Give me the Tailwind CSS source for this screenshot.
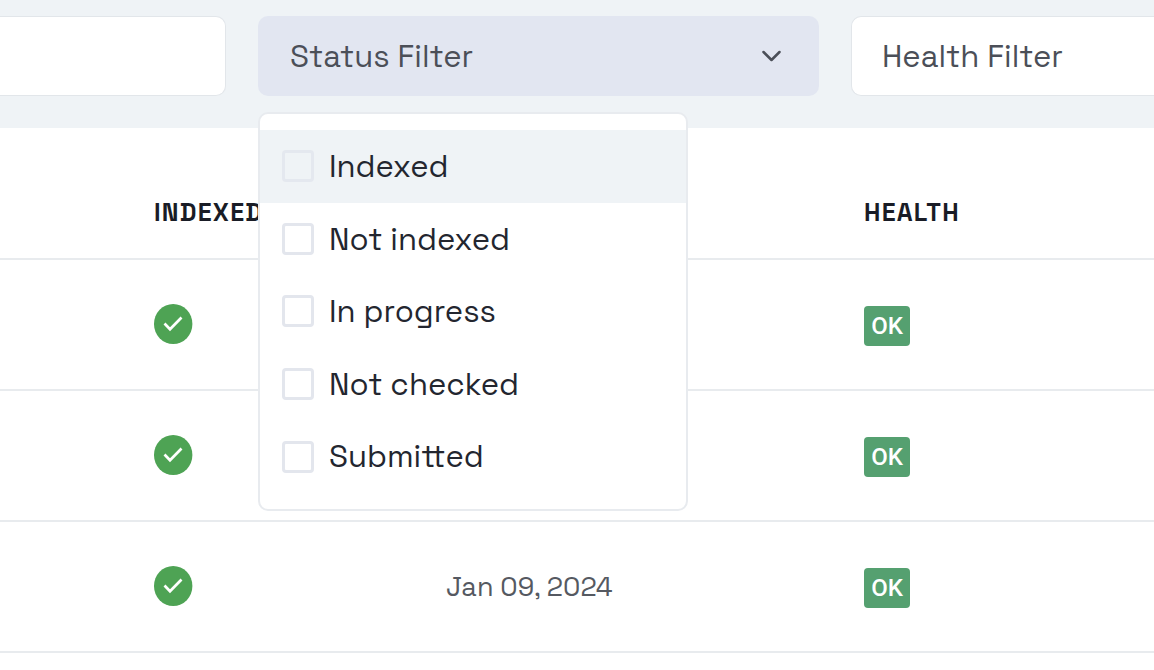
<!DOCTYPE html>
<html lang="en">
<head>
  <meta charset="UTF-8" />
  <meta name="viewport" content="width=device-width, initial-scale=1.0"/>
  <title>Indexing</title>
  <script src="https://cdn.jsdelivr.net/npm/@tailwindcss/browser@4"></script>
</head>
<body class="bg-white min-h-screen overflow-hidden font-['Space_Grotesk','Inter',sans-serif] text-[#23262f]">

  <!-- Filters -->
  <form class="grid grid-cols-[226px_561fr_303fr] gap-8 bg-[#eff3f6] pt-4 pb-8">
    <input type="text" id="search" aria-label="Search"
           class="h-20 min-w-0 px-8 bg-white border border-l-0 border-[#e2e6ea] rounded-r-[10px] text-[31px]" />

    <div class="relative">
      <button type="button" aria-expanded="true" aria-controls="status-menu"
              class="w-full h-20 px-8 flex items-center justify-between bg-[#e2e6f1] rounded-[10px] text-[31px] text-[#4b4f58]">
        Status Filter
        <svg class="w-8 h-8" viewBox="0 0 32 32" fill="none" stroke="#4b4f58" stroke-width="2.500" stroke-linecap="round" stroke-linejoin="round">
          <path d="M8.500 12l8 8 8-8" />
        </svg>
      </button>

      <!-- Status options -->
      <div id="status-menu" class="absolute z-10 left-0 top-24 w-[430px] py-4 bg-white border-2 border-[#e8ebef] rounded-[10px] text-[31px]">
        <div class="h-[363px] grid grid-rows-5">
          <label class="px-[22px] flex items-center gap-[15px] bg-[#eff3f6]">
            <input type="checkbox" class="appearance-none size-8 border-3 border-[#e4e8ef] rounded-sm" />
            Indexed
          </label>
          <label class="px-[22px] flex items-center gap-[15px]">
            <input type="checkbox" class="appearance-none size-8 border-3 border-[#e3e6ed] rounded-sm" />
            Not indexed
          </label>
          <label class="px-[22px] flex items-center gap-[15px]">
            <input type="checkbox" class="appearance-none size-8 border-3 border-[#e3e6ed] rounded-sm" />
            In progress
          </label>
          <label class="px-[22px] flex items-center gap-[15px]">
            <input type="checkbox" class="appearance-none size-8 border-3 border-[#e3e6ed] rounded-sm" />
            Not checked
          </label>
          <label class="px-[22px] flex items-center gap-[15px]">
            <input type="checkbox" class="appearance-none size-8 border-3 border-[#e3e6ed] rounded-sm" />
            Submitted
          </label>
        </div>
      </div>
    </div>

    <select id="health" aria-label="Health Filter"
            class="appearance-none h-20 min-w-0 pl-[30px] bg-white border border-r-0 border-[#e2e6ea] rounded-l-[10px] text-[31px] text-[#4b4f58]">
      <option>Health Filter</option>
    </select>
  </form>

  <!-- Pages table -->
  <table class="w-full table-fixed text-left">
    <colgroup>
      <col class="w-[154px]" />
      <col class="w-[292px]" />
      <col class="w-[418px]" />
      <col />
    </colgroup>
    <thead>
      <tr class="h-[131px] border-b-2 border-[#e8ebee] text-[25px] font-bold tracking-wider text-[#191c26]">
        <th></th>
        <th class="pt-10">INDEXED</th>
        <th></th>
        <th class="pt-10">HEALTH</th>
      </tr>
    </thead>
    <tbody>
      <tr class="h-[131px] border-b-2 border-[#e8ebee]">
        <td></td>
        <td class="pb-0.5">
          <svg class="w-10 h-10" viewBox="0 0 40 40" fill="none" role="img" aria-label="Indexed">
            <ellipse cx="19.200" cy="20" rx="19.200" ry="20" fill="#4ea354" />
            <path d="M10.500 19.500l5.500 5.700 11.500-11.700" stroke="#fff" stroke-width="2.700" />
          </svg>
        </td>
        <td></td>
        <td class="pt-0.5"><span class="inline-flex items-center justify-center align-middle w-[46px] h-10 bg-[#55a070] rounded-sm font-['Roboto',sans-serif] text-2xl font-medium text-white">OK</span></td>
      </tr>
      <tr class="h-[131px] border-b-2 border-[#e8ebee]">
        <td></td>
        <td class="pb-0.5">
          <svg class="w-10 h-10" viewBox="0 0 40 40" fill="none" role="img" aria-label="Indexed">
            <ellipse cx="19.200" cy="20" rx="19.200" ry="20" fill="#4ea354" />
            <path d="M10.500 19.500l5.500 5.700 11.500-11.700" stroke="#fff" stroke-width="2.700" />
          </svg>
        </td>
        <td></td>
        <td class="pt-0.5"><span class="inline-flex items-center justify-center align-middle w-[46px] h-10 bg-[#55a070] rounded-sm font-['Roboto',sans-serif] text-2xl font-medium text-white">OK</span></td>
      </tr>
      <tr class="h-[131px] border-b-2 border-[#e8ebee]">
        <td></td>
        <td class="pb-0.5">
          <svg class="w-10 h-10" viewBox="0 0 40 40" fill="none" role="img" aria-label="Indexed">
            <ellipse cx="19.200" cy="20" rx="19.200" ry="20" fill="#4ea354" />
            <path d="M10.500 19.500l5.500 5.700 11.500-11.700" stroke="#fff" stroke-width="2.700" />
          </svg>
        </td>
        <td class="pt-0.5 text-[27px] text-[#555961]">Jan 09, 2024</td>
        <td class="pt-0.5"><span class="inline-flex items-center justify-center align-middle w-[46px] h-10 bg-[#55a070] rounded-sm font-['Roboto',sans-serif] text-2xl font-medium text-white">OK</span></td>
      </tr>
    </tbody>
  </table>

</body>
</html>
